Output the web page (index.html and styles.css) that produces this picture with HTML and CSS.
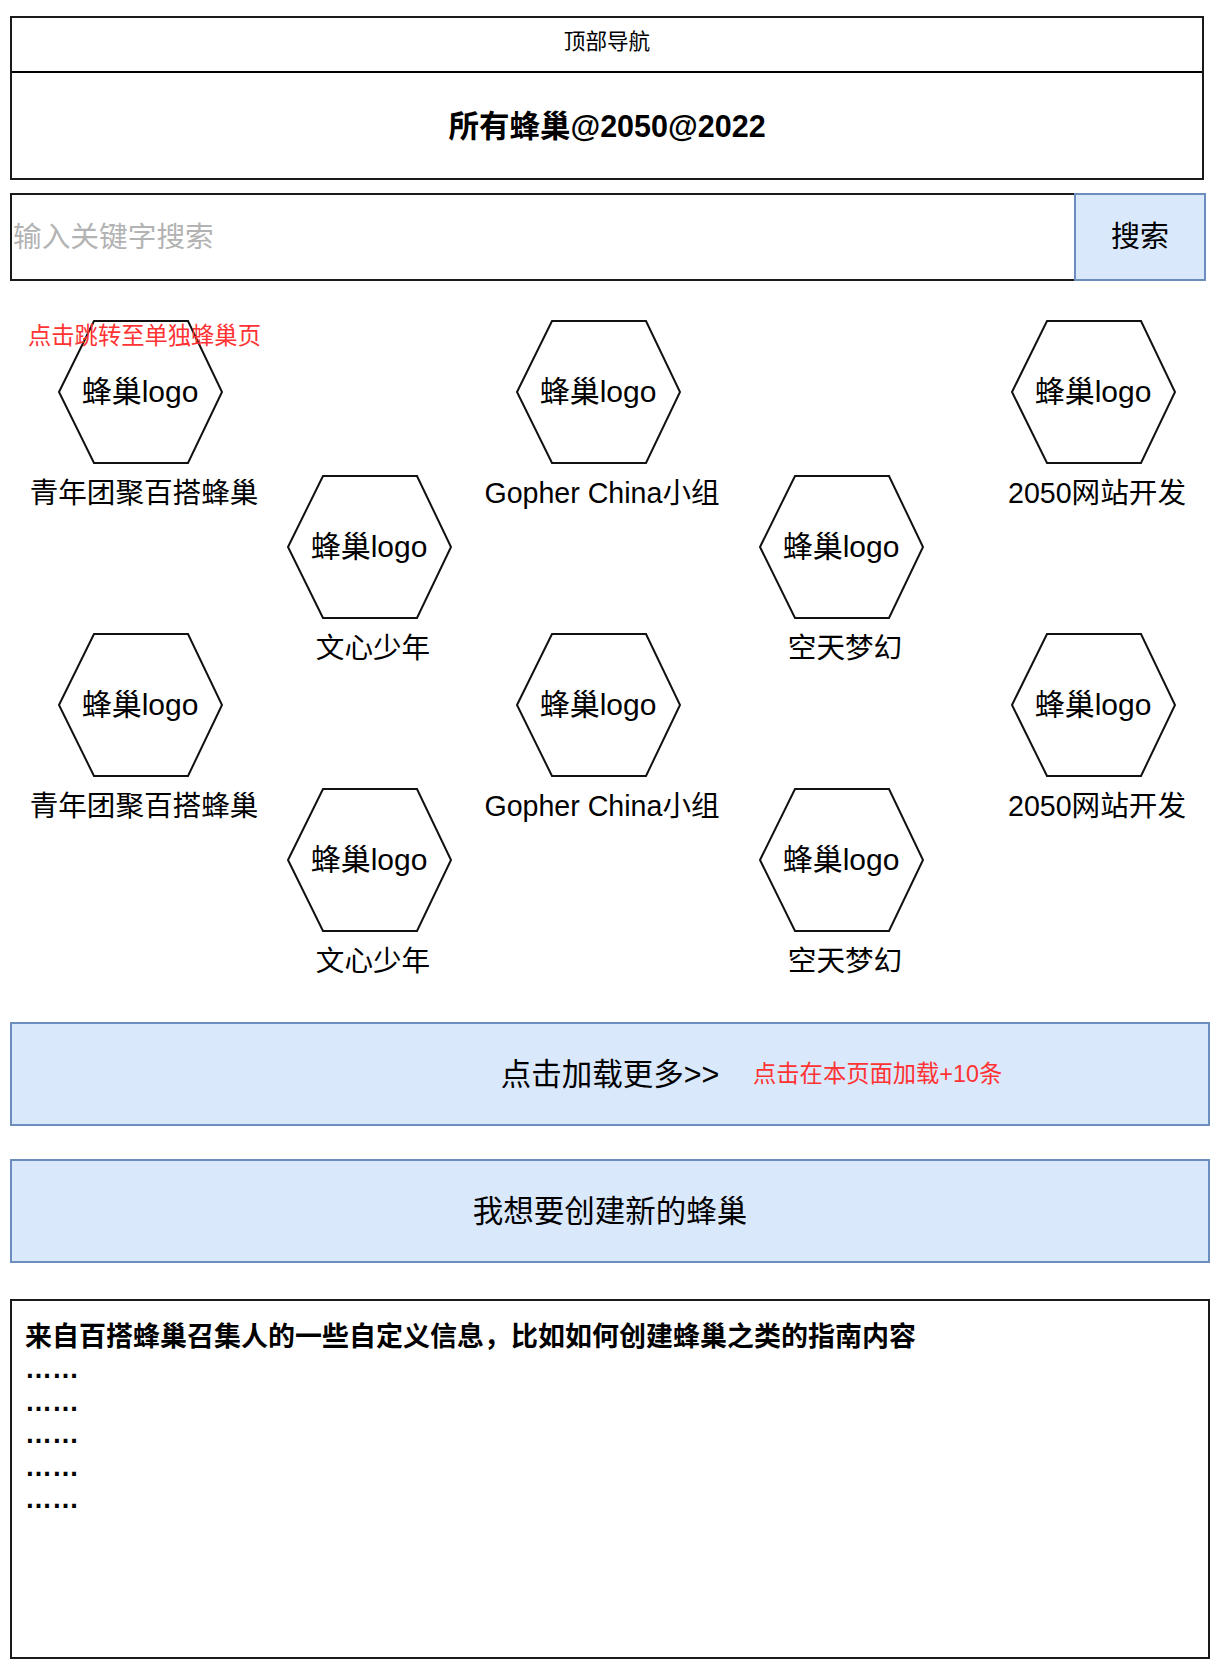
FILE: index.html
```html
<!DOCTYPE html>
<html lang="zh-CN">
<head>
<meta charset="utf-8">
<title>所有蜂巢</title>
<link rel="stylesheet" href="styles.css">
</head>
<body>
<div class="page">
  <header class="nav">
    <div class="nav-top">顶部导航</div>
    <div class="nav-title">所有蜂巢@2050@2022</div>
  </header>

  <div class="search">
    <div class="search-input">输入关键字搜索</div>
    <div class="search-btn">搜索</div>
  </div>

  <section class="hive">
    <div class="note">点击跳转至单独蜂巢页</div>

    <div class="col c1">
      <div class="node">
        <div class="hex"><svg viewBox="0 0 165 144" preserveAspectRatio="none"><polygon points="1,72 36,1 130,1 164,72 130,143 36,143"/></svg><span>蜂巢logo</span></div>
        <div class="label">青年团聚百搭蜂巢</div>
      </div>
      <div class="node">
        <div class="hex"><svg viewBox="0 0 165 144" preserveAspectRatio="none"><polygon points="1,72 36,1 130,1 164,72 130,143 36,143"/></svg><span>蜂巢logo</span></div>
        <div class="label">青年团聚百搭蜂巢</div>
      </div>
    </div>

    <div class="col c2 offset">
      <div class="node">
        <div class="hex"><svg viewBox="0 0 165 144" preserveAspectRatio="none"><polygon points="1,72 36,1 130,1 164,72 130,143 36,143"/></svg><span>蜂巢logo</span></div>
        <div class="label">文心少年</div>
      </div>
      <div class="node">
        <div class="hex"><svg viewBox="0 0 165 144" preserveAspectRatio="none"><polygon points="1,72 36,1 130,1 164,72 130,143 36,143"/></svg><span>蜂巢logo</span></div>
        <div class="label">文心少年</div>
      </div>
    </div>

    <div class="col c3">
      <div class="node">
        <div class="hex"><svg viewBox="0 0 165 144" preserveAspectRatio="none"><polygon points="1,72 36,1 130,1 164,72 130,143 36,143"/></svg><span>蜂巢logo</span></div>
        <div class="label">Gopher China小组</div>
      </div>
      <div class="node">
        <div class="hex"><svg viewBox="0 0 165 144" preserveAspectRatio="none"><polygon points="1,72 36,1 130,1 164,72 130,143 36,143"/></svg><span>蜂巢logo</span></div>
        <div class="label">Gopher China小组</div>
      </div>
    </div>

    <div class="col c4 offset">
      <div class="node">
        <div class="hex"><svg viewBox="0 0 165 144" preserveAspectRatio="none"><polygon points="1,72 36,1 130,1 164,72 130,143 36,143"/></svg><span>蜂巢logo</span></div>
        <div class="label">空天梦幻</div>
      </div>
      <div class="node">
        <div class="hex"><svg viewBox="0 0 165 144" preserveAspectRatio="none"><polygon points="1,72 36,1 130,1 164,72 130,143 36,143"/></svg><span>蜂巢logo</span></div>
        <div class="label">空天梦幻</div>
      </div>
    </div>

    <div class="col c5">
      <div class="node">
        <div class="hex"><svg viewBox="0 0 165 144" preserveAspectRatio="none"><polygon points="1,72 36,1 130,1 164,72 130,143 36,143"/></svg><span>蜂巢logo</span></div>
        <div class="label">2050网站开发</div>
      </div>
      <div class="node">
        <div class="hex"><svg viewBox="0 0 165 144" preserveAspectRatio="none"><polygon points="1,72 36,1 130,1 164,72 130,143 36,143"/></svg><span>蜂巢logo</span></div>
        <div class="label">2050网站开发</div>
      </div>
    </div>
  </section>

  <div class="btn load-more">
    <span>点击加载更多&gt;&gt;</span>
    <span class="btn-note">点击在本页面加载+10条</span>
  </div>

  <div class="btn create">我想要创建新的蜂巢</div>

  <div class="info">
    <p>来自百搭蜂巢召集人的一些自定义信息，比如如何创建蜂巢之类的指南内容</p>
    <p>……</p>
    <p>……</p>
    <p>……</p>
    <p>……</p>
    <p>……</p>
  </div>
</div>
</body>
</html>
```

FILE: styles.css
```css
* {
  box-sizing: border-box;
}

html, body {
  margin: 0;
  padding: 0;
  background: #ffffff;
}

body {
  font-family: "Liberation Sans", "Noto Sans CJK SC", sans-serif;
  color: #000000;
}

.page {
  width: 1220px;
  padding-top: 16px;
  padding-bottom: 10px;
}

/* top navigation */
.nav {
  margin-left: 10px;
  width: 1194px;
  border: 2px solid #1a1a1a;
}

.nav-top {
  height: 55px;
  border-bottom: 2px solid #000000;
  display: flex;
  align-items: center;
  justify-content: center;
  padding-bottom: 6px;
  font-size: 21.6px;
  line-height: 26px;
}

.nav-title {
  height: 105px;
  display: flex;
  align-items: center;
  justify-content: center;
  font-size: 30.5px;
  font-weight: bold;
  line-height: 36px;
}

/* search */
.search {
  display: flex;
  margin-top: 13px;
  margin-left: 10px;
  width: 1196px;
  height: 88px;
}

.search-input {
  flex: 1;
  border: 2px solid #1a1a1a;
  display: flex;
  align-items: center;
  padding-left: 1px;
  font-size: 28.7px;
  color: #b3b3b3;
  line-height: 34px;
}

.search-btn {
  width: 132px;
  margin-left: -2px;
  background: #dae8fc;
  border: 2px solid #6c8ebf;
  display: flex;
  align-items: center;
  justify-content: center;
  font-size: 29px;
  line-height: 34px;
}

/* honeycomb */
.hive {
  position: relative;
  display: flex;
  align-items: flex-start;
  margin-top: 39px;
  padding-left: 30px;
}

.note {
  position: absolute;
  left: 28px;
  top: 2px;
  font-size: 23.3px;
  line-height: 28px;
  color: #ff3333;
  white-space: nowrap;
  z-index: 2;
}

.col {
  width: 220px;
  display: flex;
  flex-direction: column;
  align-items: center;
  gap: 123px;
}

.col.offset {
  padding-top: 155px;
}

.c2 { margin-left: 9px; }
.c3 { margin-left: 9px; }
.c4 { margin-left: 23px; }
.c5 { margin-left: 32px; }

.node {
  width: 220px;
  display: flex;
  flex-direction: column;
  align-items: center;
}

.hex {
  position: relative;
  width: 165px;
  height: 144px;
  display: flex;
  align-items: center;
  justify-content: center;
}

.hex svg {
  position: absolute;
  left: 0;
  top: 0;
  width: 165px;
  height: 144px;
  overflow: visible;
}

.hex polygon {
  fill: #ffffff;
  stroke: #111111;
  stroke-width: 2;
}

.hex span {
  position: relative;
  font-size: 30px;
  line-height: 36px;
  white-space: nowrap;
}

.label {
  margin-top: 12px;
  padding-left: 8px;
  font-size: 28.6px;
  line-height: 34px;
  white-space: nowrap;
}

/* buttons */
.btn {
  position: relative;
  margin-left: 10px;
  width: 1200px;
  height: 104px;
  background: #dae8fc;
  border: 2px solid #6c8ebf;
  display: flex;
  align-items: center;
  justify-content: center;
  font-size: 30.5px;
  line-height: 36px;
}

.load-more {
  margin-top: 44px;
}

.btn-note {
  position: absolute;
  left: 741px;
  top: 50%;
  transform: translateY(-50%);
  font-size: 23.3px;
  line-height: 28px;
  color: #ff3333;
  white-space: nowrap;
}

.create {
  margin-top: 33px;
}

/* info box */
.info {
  margin-top: 36px;
  margin-left: 10px;
  width: 1200px;
  height: 360px;
  border: 2px solid #1a1a1a;
  padding: 20px 12px 0 13px;
}

.info p {
  margin: 0;
  font-size: 27px;
  font-weight: bold;
  line-height: 32.4px;
  white-space: nowrap;
}
```
